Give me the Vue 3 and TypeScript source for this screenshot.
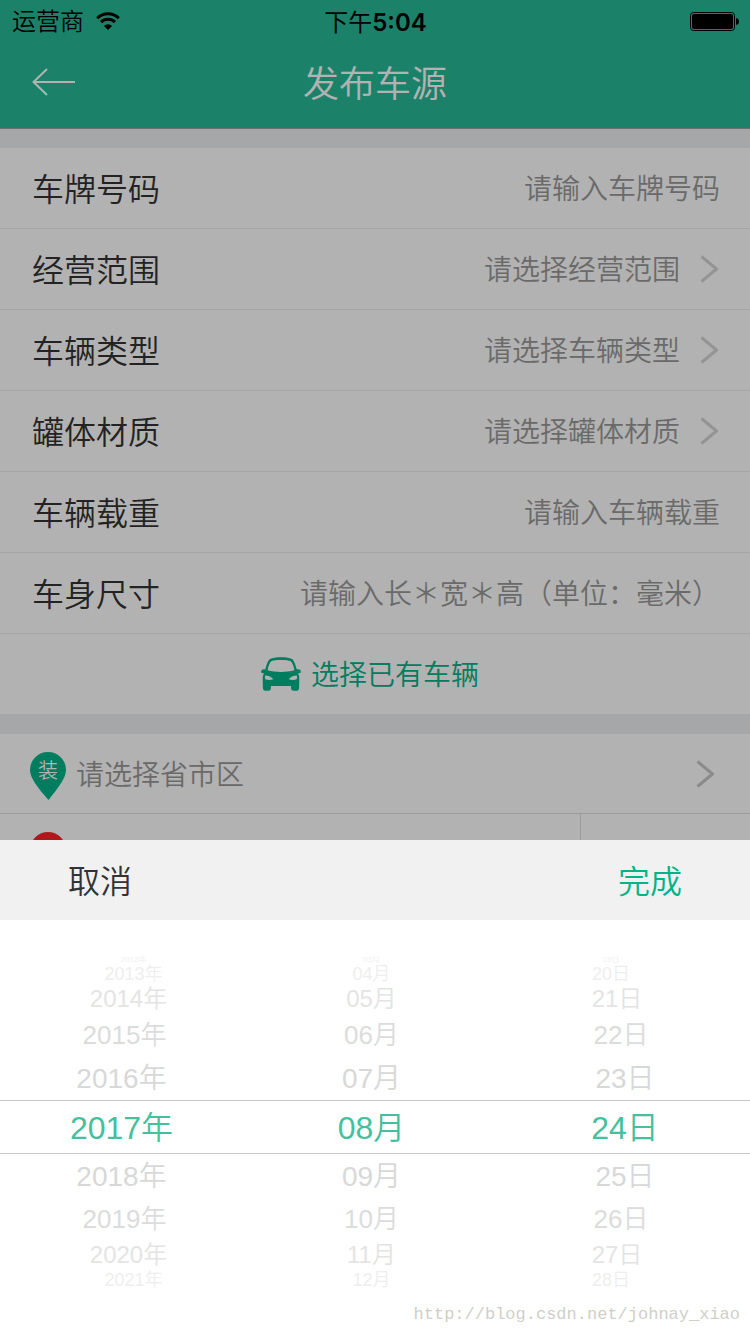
<script setup lang="ts">
import { computed, ref } from 'vue'

interface Field {
  id: string
  label: string
  hint: string
  picks: boolean
}

interface Wheel {
  name: string
  side: string
  values: string[]
}

const fields: Field[] = [
  { id: 'plate', label: '车牌号码', hint: '请输入车牌号码', picks: false },
  { id: 'scope', label: '经营范围', hint: '请选择经营范围', picks: true },
  { id: 'kind', label: '车辆类型', hint: '请选择车辆类型', picks: true },
  { id: 'material', label: '罐体材质', hint: '请选择罐体材质', picks: true },
  { id: 'load', label: '车辆载重', hint: '请输入车辆载重', picks: false },
  { id: 'size', label: '车身尺寸', hint: '请输入长＊宽＊高（单位：毫米）', picks: false },
]

const pad = (n: number): string => String(n).padStart(2, '0')
const range = (from: number, count: number): number[] =>
  Array.from({ length: count }, (_, i) => from + i)

const selectedIndex = 5
const wheels = computed<Wheel[]>(() => [
  { name: '年', side: 'left', values: range(2012, 10).map((n) => `${n}年`) },
  { name: '月', side: 'middle', values: range(3, 10).map((n) => `${pad(n)}月`) },
  { name: '日', side: 'right', values: range(19, 10).map((n) => `${pad(n)}日`) },
])

const open = ref(true)
const tier = (index: number): string => `tier-${Math.abs(index - selectedIndex)}`
</script>

<template>
  <div class="screen">
    <header class="top">
      <div class="status">
        <div class="carrier">
          <span>运营商</span>
          <svg class="wifi" viewBox="0 0 24 18" aria-hidden="true">
            <path d="M1.2 6.2A15.6 15.6 0 0 1 22.8 6.2" />
            <path d="M5 10.1A10 10 0 0 1 19 10.1" />
            <path class="solid" d="M12 18L7.9 13.9A5.8 5.8 0 0 1 16.1 13.9Z" />
          </svg>
        </div>
        <time class="clock">下午<b>5:04</b></time>
        <svg class="battery" viewBox="0 0 49 19" aria-hidden="true">
          <rect x="0.5" y="0.5" width="44" height="18" rx="3" fill="none" stroke="#000" />
          <rect x="2" y="2" width="41" height="15" rx="2" />
          <path d="M46 6Q49 6.500 49 9.500Q49 12.500 46 13Z" />
        </svg>
      </div>
      <div class="nav">
        <button class="back" type="button" aria-label="返回">
          <svg viewBox="0 0 44 28" aria-hidden="true">
            <path d="M15 1L1.500 14L15 27M1 14H43" />
          </svg>
        </button>
        <h1>发布车源</h1>
      </div>
    </header>

    <main>
      <form class="card" @submit.prevent>
        <div v-for="field in fields" :key="field.id" class="row">
          <label :for="field.id">{{ field.label }}</label>
          <button v-if="field.picks" :id="field.id" class="choice" type="button">
            <span>{{ field.hint }}</span>
            <svg class="chevron" viewBox="0 0 18 28" aria-hidden="true">
              <path d="M1.500 1.500L16.500 14L1.500 26.500" />
            </svg>
          </button>
          <input v-else :id="field.id" type="text" :placeholder="field.hint" />
        </div>
        <button class="existing" type="button">
          <svg class="car" viewBox="0 0 40 34" aria-hidden="true">
            <path
              fill-rule="evenodd"
              d="M20 0.300C14.500 0.300 11.500 0.900 9.500 1.800C7 3 5.600 7.500 4.300 12.200L1.800 12.600C0.400 12.900 -0.200 14.500 0.400 15.700L3 16.600C1.900 18 1.700 20 1.700 22.500L1.900 30.500Q2 33.700 4.300 33.700H7.300Q9.900 33.700 9.900 31V29H30.100V31Q30.100 33.700 32.700 33.700H35.700Q38 33.700 38.100 30.500L38.300 22.500C38.300 20 38.100 18 37 16.600L39.600 15.700C40.200 14.500 39.600 12.900 38.200 12.600L35.700 12.200C34.400 7.500 33 3 30.500 1.800C28.500 0.900 25.500 0.300 20 0.300ZM20 3C25 3 28 3.500 29.400 4.100C31.500 5.500 32.700 9.500 33.400 13.300C29.500 14.600 25 15 20 15S10.500 14.600 6.600 13.300C7.300 9.500 8.500 5.500 10.600 4.100C12 3.500 15 3 20 3ZM4.300 18.600C7.500 18.700 10.500 20 12.400 22.300C9.800 23.200 7 23.300 4.800 22.600C3.800 21.500 3.600 19.800 4.300 18.600ZM35.700 18.600C32.500 18.700 29.500 20 27.600 22.300C30.200 23.200 33 23.300 35.200 22.600C36.200 21.500 36.400 19.800 35.700 18.600Z"
            />
          </svg>
          <span>选择已有车辆</span>
        </button>
      </form>

      <section class="card">
        <button class="place" type="button">
          <span class="pin">
            <svg viewBox="0 0 36 48" aria-hidden="true">
              <path d="M18 0A18 18 0 0 0 0 18C0 26 8 36 18.500 48C28 36 36 26 36 18A18 18 0 0 0 18 0Z" />
            </svg>
            <span class="pin-text">装</span>
          </span>
          <span class="place-hint">请选择省市区</span>
          <svg class="chevron" viewBox="0 0 18 28" aria-hidden="true">
            <path d="M1.500 1.500L16.500 14L1.500 26.500" />
          </svg>
        </button>
        <div class="unload">
          <span class="pin red">
            <svg viewBox="0 0 36 48" aria-hidden="true">
              <path d="M18 0A18 18 0 0 0 0 18C0 26 8 36 18.500 48C28 36 36 26 36 18A18 18 0 0 0 18 0Z" />
            </svg>
          </span>
          <span class="side-cell"></span>
        </div>
      </section>
    </main>

    <div v-if="open" class="overlay">
      <section class="sheet" role="dialog">
        <div class="actions">
          <button type="button" @click="open = false">取消</button>
          <button class="done" type="button" @click="open = false">完成</button>
        </div>
        <div class="wheels">
          <ul
            v-for="wheel in wheels"
            :key="wheel.name"
            :class="wheel.side"
            role="listbox"
            :aria-label="wheel.name"
          >
            <li
              v-for="(value, index) in wheel.values"
              :key="value"
              :class="tier(index)"
              role="option"
              :aria-selected="index === selectedIndex"
            >
              {{ value }}
            </li>
          </ul>
        </div>
        <p class="site">http://blog.csdn.net/johnay_xiao</p>
      </section>
    </div>
  </div>
</template>

<style>
body {
  margin: 0;
}
</style>

<style scoped>
.screen {
  position: relative;
  height: 100vh;
  overflow: hidden;
  background: #eef0f3;
  color: #333;
  font-family: 'Liberation Sans', 'Noto Sans CJK SC', sans-serif;
  font-size: 28px;
  font-weight: 350;
}

.screen * {
  box-sizing: border-box;
}

button,
input {
  margin: 0;
  padding: 0;
  border: 0;
  background: none;
  color: inherit;
  font: inherit;
}

svg {
  display: block;
  flex: none;
}

.top {
  background: #28ba97;
  border-bottom: 1px solid #9e9e9e;
}

.status {
  display: grid;
  grid-template-columns: 1fr auto 1fr;
  align-items: center;
  height: 40px;
  padding: 0 11px 0 12px;
  color: #000;
  font-size: 24px;
  line-height: 42px;
}

.carrier {
  display: flex;
  align-items: center;
  gap: 12px;
}

.wifi {
  width: 24px;
  height: 18px;
  margin-bottom: 2px;
  fill: none;
  stroke: #000;
  stroke-width: 3;
}

.wifi .solid {
  fill: #000;
  stroke: none;
}

.clock {
  padding-top: 2px;
  font-family: Inter, 'Noto Sans CJK SC', sans-serif;
  font-weight: 400;
}

.clock b {
  font-weight: 600;
}

.battery {
  width: 49px;
  height: 19px;
  margin-bottom: 2px;
  justify-self: end;
}

.nav {
  display: grid;
  grid-template-columns: 1fr auto 1fr;
  align-items: center;
  height: 88px;
  padding: 0 32px;
  color: #fff;
}

.back {
  justify-self: start;
  padding-bottom: 4px;
  cursor: pointer;
}

.back svg {
  width: 44px;
  height: 28px;
  fill: none;
  stroke: #fff;
  stroke-width: 2;
}

h1 {
  margin: 0;
  padding-top: 2px;
  font-size: 36px;
  font-weight: inherit;
  line-height: 48px;
}

.card {
  margin-top: 20px;
  background: #fff;
}

.top + main .card:first-child {
  margin-top: 19px;
}

.row {
  display: flex;
  align-items: center;
  height: 81px;
  padding: 0 30px 0 32px;
  border-bottom: 1px solid #ececec;
}

.row label {
  flex: none;
  padding-bottom: 2px;
  font-size: 32px;
}

.row input {
  flex: 1;
  min-width: 0;
  height: 80px;
  padding-top: 4px;
  text-align: right;
  outline: none;
}

.row input::placeholder {
  color: #999;
  opacity: 1;
}

.choice {
  display: flex;
  flex: 1;
  align-items: center;
  justify-content: flex-end;
  gap: 20px;
  height: 80px;
  padding-right: 2px;
  color: #999;
}

.choice span,
.place-hint,
.existing span,
.actions button {
  padding-bottom: 2px;
}

.chevron {
  width: 18px;
  height: 28px;
  fill: none;
  stroke: #d4d4d4;
  stroke-width: 3;
}

.existing {
  display: flex;
  align-items: center;
  justify-content: center;
  gap: 10px;
  width: 100%;
  height: 80px;
  padding-right: 10px;
  color: #00b388;
}

.car {
  width: 40px;
  height: 34px;
  fill: #00b388;
}

.place,
.unload {
  display: flex;
  align-items: center;
  width: 100%;
  height: 80px;
  padding: 0 36px 0 30px;
}

.place {
  gap: 10px;
  border-bottom: 1px solid #dedede;
  color: #999;
}

.place-hint {
  flex: 1;
  text-align: left;
}

.place .chevron {
  stroke: #c8c8c8;
}

.pin {
  position: relative;
  flex: none;
  width: 36px;
  height: 48px;
  margin-top: 4px;
  fill: #00b388;
}

.pin svg {
  width: 36px;
  height: 48px;
}

.pin-text {
  position: absolute;
  inset: 0 0 10px;
  color: #fff;
  font-size: 20px;
  line-height: 38px;
  text-align: center;
}

.pin.red {
  fill: #fb2427;
}

.unload {
  justify-content: space-between;
  padding-right: 0;
}

.side-cell {
  width: 170px;
  height: 80px;
  border-left: 1px solid #dedede;
}

.overlay {
  position: absolute;
  inset: 0;
  display: flex;
  flex-direction: column;
  justify-content: flex-end;
  background: rgba(0, 0, 0, 0.3);
}

.sheet {
  background: #fff;
}

.actions {
  display: flex;
  align-items: center;
  justify-content: space-between;
  height: 80px;
  padding: 0 68px;
  background: #f1f1f1;
  font-size: 32px;
}

.actions .done {
  color: #00b388;
}

.wheels {
  display: grid;
  grid-template-columns: 243fr 257fr 250fr;
  height: 334px;
  margin-top: 36px;
  overflow: hidden;
}

ul {
  margin: 0;
  padding: 0;
  list-style: none;
}

li {
  display: flex;
  align-items: center;
  justify-content: center;
  line-height: 1;
  white-space: nowrap;
}

.tier-0 {
  height: 54px;
  padding-top: 2px;
  border: 1px solid #c8c8c8;
  border-width: 1px 0;
  color: #45bf9d;
  font-size: 32px;
}

.tier-1 {
  height: 44px;
  padding-top: 2px;
  color: #d8d8d8;
  font-size: 28px;
}

.tier-2 {
  height: 42px;
  color: #dcdcdc;
  font-size: 26px;
}

.tier-3 {
  height: 30px;
  color: #e4e4e4;
  font-size: 24px;
}

.tier-4 {
  height: 20px;
  color: #eee;
  font-size: 18px;
}

.tier-5 {
  height: 8px;
  color: #f0f0f0;
  font-size: 8px;
}

.left .tier-2 {
  padding-left: 6px;
}

.left .tier-3 {
  padding-left: 14px;
}

.left .tier-4,
.left .tier-5 {
  padding-left: 24px;
}

.right .tier-2 {
  padding-right: 8px;
}

.right .tier-3 {
  padding-right: 16px;
}

.right .tier-4,
.right .tier-5 {
  padding-right: 28px;
}

.site {
  height: 44px;
  margin: 0;
  padding: 10px 10px 0 0;
  color: #cfcfc8;
  font-family: 'Liberation Mono', monospace;
  font-size: 17px;
  line-height: 30px;
  text-align: right;
}
</style>
